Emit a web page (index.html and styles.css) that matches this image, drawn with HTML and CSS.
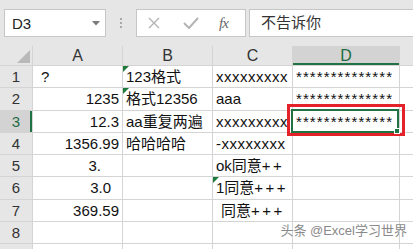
FILE: index.html
```html
<!DOCTYPE html>
<html lang="zh">
<head>
    <meta charset="UTF-8">
    <title>Excel</title>
    <link rel="stylesheet" href="styles.css">
</head>
<body>
    <div class="toolbar">
        <div class="name-box">
            <span>D3</span>
            <svg width="8" height="5" viewBox="0 0 8 5"><path d="M0 0 L8 0 L4 4.5 Z" fill="#7a7a7a"/></svg>
        </div>
        <div class="splitter">
            <svg width="2" height="10" viewBox="0 0 2 10"><rect x="0" y="0" width="2" height="2" fill="#a8a8a8"/><rect x="0" y="4" width="2" height="2" fill="#a8a8a8"/><rect x="0" y="8" width="2" height="2" fill="#a8a8a8"/></svg>
        </div>
        <div class="fx-box">
            <svg class="icon-cancel" width="12" height="12" viewBox="0 0 12 12"><path d="M1 1 L11 11 M11 1 L1 11" stroke="#b4b4b4" stroke-width="1.4"/></svg>
            <svg class="icon-ok" width="16" height="12" viewBox="0 0 16 12"><path d="M1 6 L6 11 L15 1" stroke="#b4b4b4" stroke-width="2" fill="none"/></svg>
            <span class="fx">fx</span>
        </div>
        <div class="formula">不告诉你</div>
    </div>

    <div class="sheet">
        <!-- шапка колонок -->
        <div class="corner"></div>
        <div class="ch">A</div>
        <div class="ch">B</div>
        <div class="ch">C</div>
        <div class="ch active">D</div>
        <div class="ch"></div>

        <div class="rh">1</div>
        <div class="cell indent">?</div>
        <div class="cell flag">123格式</div>
        <div class="cell xs">xxxxxxxxx</div>
        <div class="cell stars">**************</div>
        <div class="cell"></div>

        <div class="rh">2</div>
        <div class="cell num">1235</div>
        <div class="cell flag">格式12356</div>
        <div class="cell">aaa</div>
        <div class="cell stars">**************</div>
        <div class="cell"></div>

        <div class="rh active">3</div>
        <div class="cell num">12.3</div>
        <div class="cell">aa重复两遍</div>
        <div class="cell xs">xxxxxxxxx</div>
        <div class="cell stars selected">**************<span class="mark"></span><span class="handle"></span></div>
        <div class="cell"></div>

        <div class="rh">4</div>
        <div class="cell num">1356.99</div>
        <div class="cell">哈哈哈哈</div>
        <div class="cell xs">-xxxxxxxx</div>
        <div class="cell"></div>
        <div class="cell"></div>

        <div class="rh">5</div>
        <div class="cell num pad-2">3.</div>
        <div class="cell"></div>
        <div class="cell">ok同意<span class="plus">++</span></div>
        <div class="cell"></div>
        <div class="cell"></div>

        <div class="rh">6</div>
        <div class="cell num pad-1">3.0</div>
        <div class="cell"></div>
        <div class="cell flag">1同意<span class="plus">+++</span></div>
        <div class="cell"></div>
        <div class="cell"></div>

        <div class="rh">7</div>
        <div class="cell num">369.59</div>
        <div class="cell"></div>
        <div class="cell indent">同意<span class="plus">+++</span></div>
        <div class="cell"></div>
        <div class="cell"></div>

        <div class="rh">8</div>
        <div class="cell"></div>
        <div class="cell"></div>
        <div class="cell"></div>
        <div class="cell"></div>
        <div class="cell"></div>

        <div class="rh">9</div>
        <div class="cell"></div>
        <div class="cell"></div>
        <div class="cell"></div>
        <div class="cell"></div>
        <div class="cell"></div>
    </div>

    <div class="watermark">头条 @Excel学习世界</div>
</body>
</html>
```

FILE: styles.css
```css
body {
    margin: 0;
    font-family: "Liberation Sans", "Noto Sans CJK SC", sans-serif;
    background-color: #e6e6e6;
    width: 413px;
    height: 249px;
    overflow: hidden;
    position: relative;
}

/* строка формул */
.toolbar {
    display: flex;
    align-items: flex-start;
    height: 46px;
    padding-top: 9px;
    box-sizing: border-box;
}

.name-box {
    margin-left: 4px;
    width: 102px;
    height: 28px;
    box-sizing: border-box;
    border: 1px solid #c6c6c6;
    background-color: #fff;
    display: flex;
    align-items: center;
    justify-content: space-between;
    padding: 0 5px 0 7px;
    font-size: 15px;
    color: #222;
}

.splitter {
    width: 30px;
    height: 28px;
    display: flex;
    align-items: center;
    justify-content: center;
}

.fx-box {
    width: 110px;
    height: 28px;
    box-sizing: border-box;
    border: 1px solid #c6c6c6;
    background-color: #fff;
    display: flex;
    align-items: center;
    padding-left: 11px;
}

.icon-cancel {
    margin-right: 23px;
}

.icon-ok {
    margin-right: 20px;
}

.fx {
    font-family: "Liberation Serif", serif;
    font-style: italic;
    font-size: 15px;
    color: #666;
    letter-spacing: -1px;
}

.formula {
    flex: 1;
    margin-left: 3px;
    height: 28px;
    box-sizing: border-box;
    border: 1px solid #c6c6c6;
    border-right: none;
    background-color: #fff;
    padding-left: 11px;
    font-size: 15px;
    line-height: 25px;
    color: #333;
}

/* сетка листа */
.sheet {
    display: grid;
    grid-template-columns: 32px 89px 89px 79px 106px 1fr;
    grid-template-rows: 19px repeat(9, 21.25px);
    gap: 1px;
    background-color: #d4d4d4;
    height: 203px;
    overflow: hidden;
    font-size: 15px;
}

.corner {
    background-color: #e6e6e6;
    position: relative;
}

    .corner::after {
        content: "";
        position: absolute;
        right: 2px;
        bottom: 2px;
        width: 13px;
        height: 13px;
        background-color: #b9b9b9;
        clip-path: polygon(100% 0, 100% 100%, 0 100%);
    }

.ch {
    background-color: #e6e6e6;
    text-align: center;
    font-size: 16px;
    line-height: 19px;
    color: #333;
}

    .ch.active {
        background-color: #d3d3d3;
        color: #1f6b43;
        box-shadow: inset 0 -2px 0 #217346;
    }

.rh {
    background-color: #e6e6e6;
    text-align: center;
    line-height: 21px;
    color: #333;
}

    .rh.active {
        background-color: #d3d3d3;
        color: #1f6b43;
        box-shadow: inset -2px 0 0 #217346;
    }

.cell {
    background-color: #fff;
    line-height: 21px;
    padding: 0 3px;
    white-space: pre;
    overflow: hidden;
    color: #111;
    position: relative;
}

.num {
    text-align: right;
}

.pad-1 {
    padding-right: 11px;
}

.pad-2 {
    padding-right: 21px;
}

.indent {
    padding-left: 8px;
}

.xs {
    letter-spacing: 0.5px;
}

.stars {
    letter-spacing: 1.1px;
    overflow: visible;
}

.plus {
    letter-spacing: 2.5px;
}

/* зелёный флажок "число как текст" */
.flag::before {
    content: "";
    position: absolute;
    left: 0;
    top: 0;
    border-top: 6px solid #1e7a3c;
    border-right: 6px solid transparent;
}

.selected {
    z-index: 2;
}

    .selected::after {
        content: "";
        position: absolute;
        left: -2px;
        top: -1.5px;
        right: 0;
        bottom: -1.5px;
        border: 2px solid #217346;
    }

.mark {
    position: absolute;
    left: -6px;
    top: -6.5px;
    right: -6px;
    bottom: -4px;
    border: 3px solid #e3222a;
}

.handle {
    position: absolute;
    right: -1px;
    bottom: -2px;
    width: 4px;
    height: 4px;
    background-color: #217346;
    border: 1px solid #fff;
    z-index: 3;
}

.watermark {
    position: absolute;
    right: 6px;
    bottom: 10px;
    font-size: 13px;
    color: #8a8a8a;
    text-shadow: 0 0 2px #fff;
}
```
